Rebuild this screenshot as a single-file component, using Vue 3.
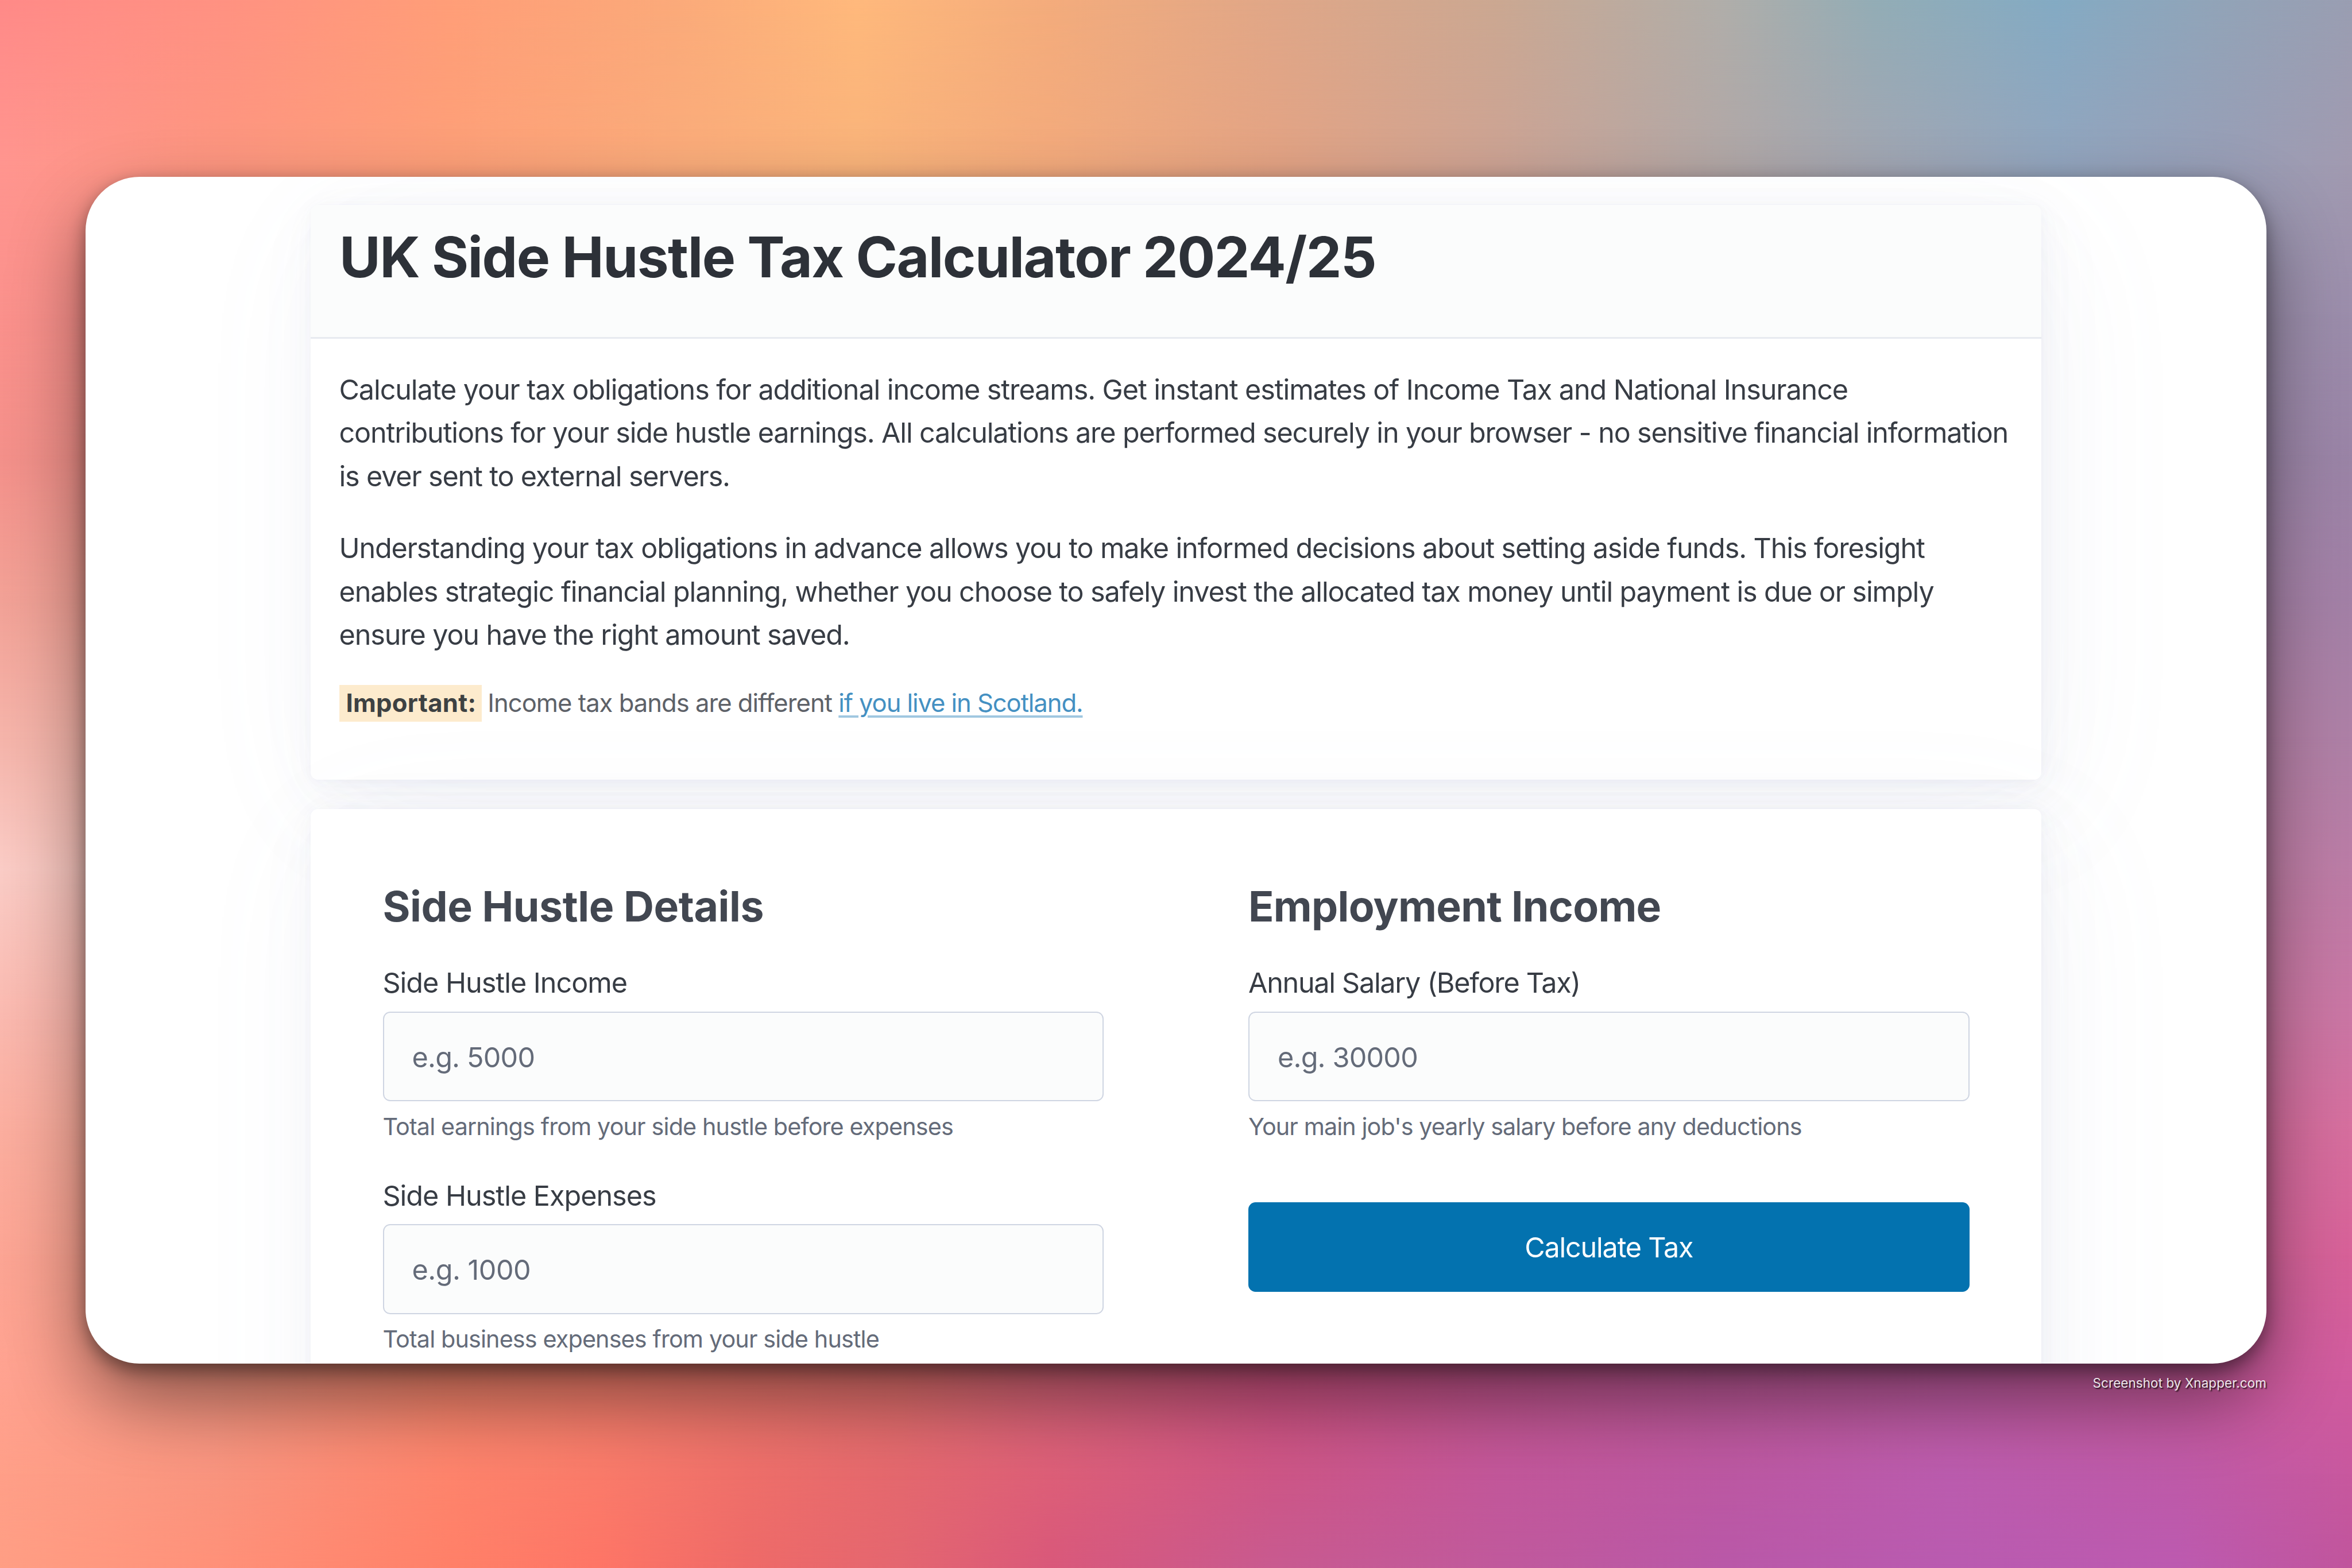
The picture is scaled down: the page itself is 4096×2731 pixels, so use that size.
<script setup>
// Wallpaper: a colour mesh. Each row is a horizontal gradient that fades in over the row above it.
const topStops = [0, 9.6, 19.1, 28.7, 36.4, 44.6, 54.2, 63.8, 73.3, 79.7, 87.4, 94.4, 100]
const sideStops = [0, 4, 96, 100]
const bottomStops = [0, 9.6, 19.1, 25.5, 31.9, 38.3, 44.6, 54.2, 63.8, 73.3, 82.9, 92.5, 100]

const rows = [
  { y: 0, stops: topStops, colors: ['#ff8a88', '#ff9282', '#ff9e78', '#fbaa7a', '#ffb97c', '#f4ac7c', '#e0a788', '#cba892', '#b0aeaa', '#93adb6', '#84abc4', '#92a4b8', '#9a9eb2'] },
  { y: 10.5, stops: topStops, colors: ['#ff958f', '#fd967f', '#fd9f78', '#faab7a', '#f9b37a', '#f3aa7c', '#e3a384', '#cca394', '#b1a7a6', '#a2a6b2', '#92a5be', '#989eb6', '#a19ab0'] },
  { y: 20, stops: sideStops, colors: ['#fb918c', '#f8908a', '#9c8fac', '#9b8dab'] },
  { y: 29, stops: sideStops, colors: ['#f4908a', '#ee8f88', '#9c86a8', '#9a84a6'] },
  { y: 38, stops: sideStops, colors: ['#f2a196', '#ef9f94', '#a783a8', '#a280a6'] },
  { y: 47, stops: sideStops, colors: ['#f5b4aa', '#f4b4a9', '#b580a6', '#ad80a6'] },
  { y: 55.5, stops: sideStops, colors: ['#faccc6', '#f8c4bc', '#bf7da4', '#bb7ca6'] },
  { y: 65, stops: sideStops, colors: ['#fab9af', '#f9b3a9', '#cb76a1', '#ca76a4'] },
  { y: 72, stops: sideStops, colors: ['#fbae9f', '#f9aa9a', '#d26c9c', '#d66f9e'] },
  { y: 80, stops: sideStops, colors: ['#fca594', '#f8a08e', '#d3649a', '#d76198'] },
  { y: 88, stops: bottomStops, colors: ['#ffa290', '#f2937f', '#f4846c', '#f37e6c', '#ea766c', '#e2706e', '#d86478', '#cc5280', '#c0548c', '#bc5896', '#be5a9e', '#c85a9c', '#d05b9e'] },
  { y: 94, stops: bottomStops, colors: ['#ff9f88', '#f9947e', '#fe846c', '#fa7b6a', '#ee6f6a', '#e4686e', '#dd5f78', '#cd5686', '#c2579a', '#bc58a2', '#bb5cae', '#be5aa8', '#c8589e'] },
  { y: 100, stops: bottomStops, colors: ['#ff9e84', '#ff9078', '#ff8068', '#fe7566', '#ee6a68', '#e46670', '#d9587a', '#c85a90', '#c0599c', '#b958a8', '#b95bb0', '#bc5ab0', '#c0559c'] },
]

const layers = rows.map((row, i) => {
  const gradient = `linear-gradient(90deg, ${row.colors.map((c, k) => `${c} ${row.stops[k]}%`).join(', ')})`
  if (i === 0) return { background: gradient }
  const mask = `linear-gradient(180deg, transparent ${rows[i - 1].y}%, #000 ${row.y}%)`
  return { background: gradient, maskImage: mask }
})

const intro = [
  [
    { text: 'Calculate your tax obligations for additional income streams. Get instant estimates of Income Tax and National Insurance', cls: 'a' },
    { text: 'contributions for your side hustle earnings. All calculations are performed securely in your browser - no sensitive financial information', cls: 'b' },
    { text: 'is ever sent to external servers.', cls: 'b' },
  ],
  [
    { text: 'Understanding your tax obligations in advance allows you to make informed decisions about setting aside funds. This foresight', cls: 'c' },
    { text: 'enables strategic financial planning, whether you choose to safely invest the allocated tax money until payment is due or simply', cls: 'c' },
    { text: 'ensure you have the right amount saved.', cls: 'c' },
  ],
]

const hustleFields = [
  { id: 'income', label: 'Side Hustle Income', placeholder: 'e.g. 5000', help: 'Total earnings from your side hustle before expenses' },
  { id: 'expenses', label: 'Side Hustle Expenses', placeholder: 'e.g. 1000', help: 'Total business expenses from your side hustle' },
]
</script>

<template>
  <div class="desktop">
    <div class="wallpaper">
      <div v-for="(layer, i) in layers" :key="i" class="layer" :style="layer"></div>
    </div>

    <main class="window">
      <article class="card">
        <header class="card-header">
          <h1>UK Side Hustle Tax Calculator 2024/25</h1>
        </header>
        <div class="card-body">
          <p v-for="(para, i) in intro" :key="i" class="para">
            <span v-for="line in para" :key="line.text" class="line" :class="line.cls">{{ line.text }}</span>
          </p>
          <p class="note">
            <mark>Important:</mark>
            <span class="note-text">Income tax bands are different</span>
            <a>if you live in Scotland.</a>
          </p>
        </div>
      </article>

      <article class="card form">
        <section class="column">
          <h2>Side Hustle Details</h2>
          <div v-for="f in hustleFields" :key="f.id" class="field">
            <label :for="f.id">{{ f.label }}</label>
            <input :id="f.id" :class="f.id" type="text" :placeholder="f.placeholder" />
            <small>{{ f.help }}</small>
          </div>
        </section>
        <section class="column">
          <h2 class="employment">Employment Income</h2>
          <div class="field salary">
            <label for="salary">Annual Salary (Before Tax)</label>
            <input id="salary" type="text" placeholder="e.g. 30000" />
            <small>Your main job's yearly salary before any deductions</small>
          </div>
          <button type="button">Calculate Tax</button>
        </section>
      </article>
    </main>

    <footer class="credit">Screenshot by Xnapper.com</footer>
  </div>
</template>

<style>
body {
  margin: 0;
  overflow: hidden;
}
</style>

<style scoped>
.desktop {
  position: relative;
  box-sizing: border-box;
  width: 4096px;
  height: 2731px;
  padding: 307.6px 149px 0;
  overflow: hidden;
  font-family: Inter, "Liberation Sans", sans-serif;
  color: #373c44;
}
.wallpaper,
.layer {
  position: absolute;
  inset: 0;
}
.window {
  position: relative;
  display: flex;
  flex-direction: column;
  gap: 51px;
  box-sizing: border-box;
  height: 2067.7px;
  padding: 49.5px 392px 0;
  overflow: hidden;
  border-radius: 94px;
  background: #fff;
  box-shadow: 0 12px 30px rgba(0, 0, 0, 0.4), 0 60px 130px rgba(0, 0, 0, 0.45);
}
.card {
  flex: none;
  border-radius: 12.5px;
  background: #fff;
  font-size: 50.2px;
  box-shadow:
    0.0145em 0.029em 0.174em rgba(129, 145, 181, 0.017),
    0.0335em 0.067em 0.402em rgba(129, 145, 181, 0.024),
    0.0625em 0.125em 0.75em rgba(129, 145, 181, 0.03),
    0.1125em 0.225em 1.35em rgba(129, 145, 181, 0.036),
    0.2085em 0.417em 2.502em rgba(129, 145, 181, 0.043),
    0.5em 1em 6em rgba(129, 145, 181, 0.06),
    0 0 0 0.0125em rgba(129, 145, 181, 0.015);
}
.card-header {
  box-sizing: border-box;
  height: 232.6px;
  padding: 31.7px 50px 0;
  border-bottom: 3px solid #e7eaf0;
  border-radius: 12.5px 12.5px 0 0;
  background: #fbfcfc;
}
h1 {
  margin: 0;
  font-size: 98px;
  line-height: 118px;
  font-weight: 700;
  letter-spacing: -1.51px;
  color: #2d3138;
  white-space: nowrap;
}
.card-body {
  box-sizing: border-box;
  height: 768.4px;
  padding: 51.2px 49.5px 0;
}
.para {
  margin: 0 0 50.2px;
  font-size: 48.5px;
  line-height: 75.36px;
}
.line {
  display: block;
  white-space: nowrap;
}
.a {
  letter-spacing: -1.085px;
}
.b {
  letter-spacing: -1.165px;
}
.c {
  letter-spacing: -1.122px;
}
.note {
  display: flex;
  align-items: baseline;
  margin: -1px 0 0;
  font-size: 43.6px;
  line-height: 65.7px;
  white-space: nowrap;
  color: #5d6168;
}
mark {
  margin-right: 9.9px;
  padding: 0 10.1px 0 12px;
  background: #fdebcd;
  color: #3d4142;
  font-weight: 700;
  line-height: 63.4px;
  letter-spacing: 0.28px;
}
.note-text {
  margin-right: 11.4px;
  letter-spacing: -1px;
}
a {
  color: #4490c2;
  letter-spacing: -1.08px;
  text-decoration: underline 4px #a0c7e0;
  text-underline-offset: 6px;
}
.form {
  display: grid;
  grid-template-columns: 1fr 1fr;
  column-gap: 252px;
  height: 1200px;
  padding: 129px 125.5px 0;
}
.column {
  display: flex;
  flex-direction: column;
}
h2 {
  margin: 0 0 54.1px;
  font-size: 73.3px;
  line-height: 82px;
  font-weight: 700;
  letter-spacing: -0.42px;
  color: #424751;
}
h2.employment {
  letter-spacing: -0.7px;
}
.field {
  display: flex;
  flex-direction: column;
  margin-bottom: 51.9px;
}
label {
  margin-bottom: 12.1px;
  font-size: 48.5px;
  line-height: 75.4px;
  letter-spacing: -1px;
}
.salary label {
  letter-spacing: -1.28px;
}
input {
  box-sizing: border-box;
  width: 100%;
  height: 156.5px;
  margin: 0 0 12.6px;
  padding: 3px 49px 0;
  border: 2.5px solid #cfd5e2;
  border-radius: 12.5px;
  outline: 0;
  background: #fbfcfc;
  font: 48.5px Inter, "Liberation Sans", sans-serif;
  letter-spacing: -0.8px;
}
input.expenses {
  letter-spacing: -0.5px;
}
input::placeholder {
  color: #646b79;
  opacity: 1;
}
small {
  font-size: 41.3px;
  line-height: 62px;
  letter-spacing: -0.86px;
  color: #646b79;
}
.salary small {
  letter-spacing: -0.91px;
}
button {
  height: 156px;
  margin-top: 49.5px;
  padding: 1px 0 0;
  border: 0;
  border-radius: 12.5px;
  background: #0372af;
  color: #fff;
  font: 48.5px Inter, "Liberation Sans", sans-serif;
  letter-spacing: -1.2px;
}
.credit {
  position: relative;
  margin-top: 19.5px;
  text-align: right;
  font-size: 22.5px;
  line-height: 28px;
  letter-spacing: 0.05px;
  color: rgba(255, 255, 255, 0.9);
  text-shadow: 2px 2px 2px rgba(0, 0, 0, 0.75);
}
</style>
